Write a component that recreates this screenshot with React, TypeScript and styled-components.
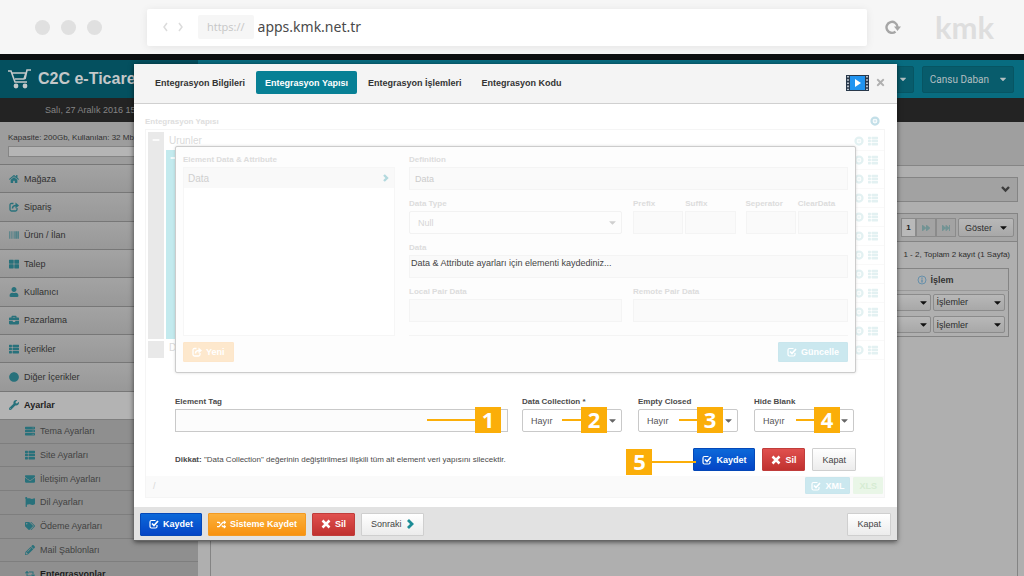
import React from 'react';
import styled, { createGlobalStyle, css } from 'styled-components';
import {
  FaHome, FaBarcode, FaThLarge, FaUser, FaBriefcase, FaThList, FaCircle, FaWrench, FaServer,
  FaEnvelope, FaFlag, FaTags, FaPencilAlt, FaRetweet, FaTimes, FaRandom,
  FaForward, FaFastForward, FaCaretDown, FaMinus,
} from 'react-icons/fa';

const Global = createGlobalStyle`
  * { box-sizing: border-box; }
  body { margin: 0; font-family: "Liberation Sans", Arial, sans-serif; font-size: 9px; color: #333; background: #b0b0b0; }
  button, input, select { font-family: inherit; margin: 0; }
`;

const Page = styled.div`
  position: relative;
  display: flex;
  flex-direction: column;
  height: 100vh;
  overflow: hidden;
`;

/* ---------- browser bar ---------- */
const BrowserBar = styled.header`
  display: flex;
  align-items: center;
  flex: none;
  height: 54px;
  padding: 0 32px 0 35px;
  background: #f6f6f6;
`;
const Lights = styled.div`
  display: flex;
  gap: 11px;
  width: 112px;
  span { width: 15px; height: 15px; border-radius: 50%; background: #e0e0e0; }
`;
const AddressBar = styled.div`
  display: flex;
  align-items: center;
  flex: 1;
  height: 37px;
  padding-left: 15px;
  background: #fff;
  border-radius: 2px;
  box-shadow: 0 1px 8px rgba(0, 0, 0, 0.08);
`;
const Arrows = styled.svg`
  width: 22px;
  height: 10px;
  margin-right: 14px;
`;
const Scheme = styled.span`
  padding: 0 9px;
  line-height: 24px;
  border-radius: 2px;
  background: #f6f6f6;
  color: #c6c6c6;
  font-family: "Open Sans", sans-serif;
  font-size: 11px;
`;
const Address = styled.input`
  flex: 1;
  min-width: 0;
  padding: 0 4px 2px;
  border: 0;
  outline: 0;
  background: none;
  color: #4a4a4a;
  && { font-family: "Noto Sans", sans-serif; }
  font-size: 14px;
`;
const Reload = styled.button`
  display: flex;
  width: 68px;
  padding: 0 0 0 18px;
  border: 0;
  background: none;
  color: #a6a6a6;
`;
const Brand = styled.span`
  width: 57px;
  color: #dedede;
  font: 700 31px/50px Lato, sans-serif;
`;

/* ---------- application behind the dialog ---------- */
const TopStrip = styled.div`
  flex: none;
  height: 6px;
  background: #0c0f11;
`;
const TopBar = styled.div`
  display: flex;
  align-items: center;
  justify-content: space-between;
  flex: none;
  height: 38px;
  padding: 0 10px 0 8px;
  background: linear-gradient(90deg, #04505f 198px, #086c80 198px);
`;
const AppTitle = styled.h1`
  display: flex;
  align-items: center;
  gap: 6px;
  margin: 0;
  color: #c4c8c9;
  font-size: 16px;
`;
const UserButtons = styled.div`
  display: flex;
  gap: 8px;
`;
const UserButton = styled.button`
  display: flex;
  align-items: center;
  justify-content: flex-end;
  gap: 9px;
  height: 27px;
  min-width: 60px;
  padding: 0 5px 0 7px;
  border: 1px solid #075563;
  border-radius: 2px;
  background: #085c6c;
  color: #b3bfc1;
  font-size: 10px;
  && { font-family: Roboto, sans-serif; }
`;
const DateBar = styled.div`
  flex: none;
  height: 24px;
  padding-left: 45px;
  background: #232323;
  color: #858585;
  font-size: 9px;
  line-height: 24px;
`;
const Columns = styled.div`
  display: flex;
  flex: 1;
  min-height: 0;
`;
const Sidebar = styled.aside`
  flex: none;
  width: 198px;
  background: #8f8f8f;
`;
const Capacity = styled.div`
  height: 42px;
  padding: 11px 8px 0;
  background: #9d9d9d;
  color: #303030;
  font-size: 8px;
  line-height: 9px;
`;
const Meter = styled.div`
  height: 11px;
  margin-top: 4px;
  border: 1px solid #858585;
  background: #b5b5b5;
`;
const Menu = styled.nav<{ $sub?: boolean }>`
  display: grid;
  grid-auto-rows: 1fr;
  height: ${p => (p.$sub ? 166 : 255)}px;
`;
const MenuLink = styled.a<{ $sub?: boolean; $active?: boolean }>`
  display: flex;
  align-items: center;
  gap: 5px;
  padding-left: ${p => (p.$sub ? 25 : 9)}px;
  border-top: 1px solid ${p => (p.$sub ? '#7e7e7e' : '#777')};
  background: ${p => (p.$active ? '#b3b3b3' : p.$sub ? '#8f8f8f' : 'linear-gradient(#a3a3a3, #989898)')};
  color: ${p => (p.$sub ? '#424242' : '#303030')};
  font-size: 9px;
  text-decoration: none;
  ${p => p.$active && css`font-weight: 700; color: #1c1c1c;`}
  svg { color: #28717b; width: 10px; height: 10px; }
`;
const SubLink = styled(MenuLink)<{ $bold?: boolean }>`
  font-weight: ${p => (p.$bold ? 700 : 400)};
  color: ${p => (p.$bold ? '#1c1c1c' : '#424242')};
`;
const Main = styled.main`
  display: flex;
  flex: 1;
  flex-direction: column;
  min-width: 0;
  background: #afafaf;
`;
const Crumbs = styled.div`
  flex: none;
  height: 44px;
  border-bottom: 1px solid #858585;
  background: #9f9f9f;
`;
const Content = styled.div`
  display: flex;
  flex: 1;
  flex-direction: column;
  min-height: 0;
  margin: 0 6px 0 12px;
  padding-top: 11px;
`;
const Filter = styled.div`
  display: flex;
  align-items: center;
  justify-content: flex-end;
  flex: none;
  height: 25px;
  margin-bottom: 11px;
  padding-right: 7px;
  border: 1px solid #848484;
  background: #a2a2a2;
  color: #3c3c3c;
`;
const ListPanel = styled.section`
  flex: 1;
  min-height: 0;
  border: 1px solid #848484;
  border-bottom: 0;
`;
const PageTools = styled.div`
  display: flex;
  justify-content: flex-end;
  height: 28px;
  padding: 4px 3px 0 0;
  border-bottom: 1px solid #848484;
  background: #a6a6a6;
`;
const PageButton = styled.button<{ $on?: boolean }>`
  width: ${p => (p.$on ? 15 : 20)}px;
  height: 19px;
  padding: 0;
  border: 1px solid #8b8b8b;
  background: ${p => (p.$on ? '#b9b9b9' : '#a3a3a3')};
  color: ${p => (p.$on ? '#222' : '#729394')};
  font-size: 8px;
  font-weight: 700;
  svg { vertical-align: middle; }
`;
const SmallMenu = styled.button<{ $wide?: boolean }>`
  display: flex;
  align-items: center;
  justify-content: space-between;
  width: ${p => (p.$wide ? 72 : 56)}px;
  height: ${p => (p.$wide ? 17 : 19)}px;
  margin-left: 2px;
  padding: 0 ${p => (p.$wide ? 1 : 4)}px 0 ${p => (p.$wide ? 3 : 6)}px;
  border: 1px solid #8b8b8b;
  border-radius: 2px;
  background: linear-gradient(#b8b8b8, #a8a8a8);
  color: #2c2c2c;
  font-size: 9px;
  svg { color: #111; font-size: 11px; }
`;
const Summary = styled.p`
  margin: 0;
  padding-right: 7px;
  color: #2d2d2d;
  font-size: 8px;
  line-height: 26px;
  text-align: right;
`;
const Table = styled.table`
  width: calc(100% - 8px);
  border: 1px solid #848484;
  border-collapse: collapse;
  th { height: 22px; padding: 0; text-align: left; font-size: 9px; border-bottom: 1px solid #999; }
  th:last-child, td:last-child { width: 78px; padding: 0; }
  td { height: 23px; padding: 0; }
  td:first-child button { margin-left: auto; }
  th:first-child { padding-right: 4px; text-align: right; color: #6790ab; }
  th svg { vertical-align: middle; }
`;

/* ---------- dialog ---------- */
const Dialog = styled.section`
  position: absolute;
  top: 64px;
  left: 134px;
  right: 127px;
  display: flex;
  flex-direction: column;
  background: #fff;
  border-bottom: 1px solid #666;
  box-shadow: 0 1px 5px rgba(0, 0, 0, 0.6);
`;
const DialogHeader = styled.div`
  display: flex;
  align-items: center;
  height: 40px;
  padding: 0 11px 2px 12px;
  border-bottom: 1px solid #d0d0d0;
  background: #f4f4f4;
`;
const Tab = styled.button<{ $on?: boolean }>`
  height: 23px;
  margin-right: 2px;
  padding: 0 9px;
  border: 0;
  border-radius: 2px;
  background: ${p => (p.$on ? '#078095' : 'none')};
  color: ${p => (p.$on ? '#fff' : '#333')};
  font-size: 9px;
  font-weight: 700;
`;
const HeaderEnd = styled.div`
  display: flex;
  align-items: center;
  gap: 6px;
  margin-left: auto;
`;
const CloseButton = styled.button`
  display: flex;
  padding: 0;
  border: 0;
  background: none;
  color: #b0b0b0;
  font-size: 11px;
`;
const DialogBody = styled.div`
  position: relative;
  padding: 9px 12px 9px 11px;
`;
const TreeHeading = styled.div`
  display: flex;
  align-items: center;
  justify-content: space-between;
  height: 16px;
  padding-right: 5px;
  color: #dedede;
  font-size: 8px;
  font-weight: 700;
  svg { color: #c3dfe8; }
`;
const TreeBox = styled.div`
  display: flex;
  flex-direction: column;
  height: 369px;
  border: 1px solid #f5f5f5;
`;
const TreeArea = styled.div`
  display: flex;
  flex: 1;
  padding-top: 2px;
`;
const Rail = styled.div`
  display: flex;
  flex-direction: column;
  gap: 2px;
  width: 16px;
  margin: 0 2px;
`;
const NestedRail = styled(Rail)`
  margin: 0;
`;
const RailBlock = styled.div<{ $h: number; $teal?: boolean }>`
  height: ${p => p.$h}px;
  padding-top: 4px;
  background: ${p => (p.$teal ? '#c3eaee' : '#e9e9e9')};
  color: #fff;
  font-size: 8px;
  line-height: 8px;
  text-align: center;
`;
const Branch = styled.div`
  flex: 1;
`;
const BranchName = styled.div`
  height: 18px;
  padding-left: 3px;
  color: #dadada;
  font-size: 10px;
  line-height: 17px;
`;
const TreeRows = styled.div`
  width: 32px;
  div {
    display: flex;
    align-items: center;
    gap: 4px;
    height: 19px;
    padding-left: 2px;
    border-bottom: 1px solid #f9f9f9;
    color: #e3f1f2;
    font-size: 10px;
  }
`;
const TreeFoot = styled.div`
  display: flex;
  gap: 3px;
  height: 21px;
  padding: 1px 1px 0 7px;
  background: #fafafa;
  color: #d8d8d8;
  line-height: 18px;
  span { flex: 1; }
`;

const Popup = styled.div`
  position: absolute;
  top: 42px;
  left: 41px;
  right: 41px;
`;
const Panel = styled.div`
  display: flex;
  flex-direction: column;
  height: 227px;
  padding: 8px 7px;
  border: 1px solid #ccc;
  border-radius: 2px;
  background: #fdfdfd;
  box-shadow: 0 0 3px rgba(0, 0, 0, 0.15);
  color: #d6d6d6;
`;
const PanelColumns = styled.div`
  display: grid;
  grid-template-columns: 212px 1fr;
  gap: 14px;
  height: 180px;
`;
const Label = styled.label<{ $faint?: boolean }>`
  display: block;
  height: 12px;
  color: ${p => (p.$faint ? '#dcdcdc' : '#4b4b4b')};
  font-size: 8px;
  font-weight: 700;
  line-height: 9px;
  white-space: nowrap;
`;
const DataList = styled.div`
  display: flex;
  flex-direction: column;
  height: 169px;
  border: 1px solid #f6f6f6;
  background: #fff;
`;
const DataRow = styled.div`
  display: flex;
  align-items: center;
  justify-content: space-between;
  height: 20px;
  padding: 0 4px;
  background: #f9f9f9;
  color: #cfcfcf;
  font-size: 10px;
  svg { color: #b3d9de; }
`;
const Fields = styled.div`
  display: grid;
  grid-template-columns: 213px 1fr;
  grid-auto-rows: 35px;
  align-content: start;
  gap: 9px 11px;
  border-bottom: 1px solid #f4f4f4;
`;
const Cell = styled.div<{ $all?: boolean }>`
  position: relative;
  grid-column: ${p => (p.$all ? '1 / -1' : 'auto')};
  min-width: 0;
`;
const Quad = styled.div`
  display: grid;
  grid-template-columns: 1fr 1fr 6px 1fr 1fr;
  gap: 2px;
  ${Cell}:nth-child(3) { grid-column: 4; }
`;
const TextInput = styled.input<{ $faint?: boolean; $note?: boolean }>`
  display: block;
  width: 100%;
  height: 23px;
  padding: 0 ${p => (p.$note ? 1 : 5)}px ${p => (p.$note ? 7 : 0)}px;
  border: 1px solid ${p => (p.$faint ? '#f4f4f4' : '#c9c9c9')};
  outline: 0;
  background: ${p => (p.$faint ? '#fafafa' : '#fcfcfc')};
  color: ${p => (p.$note ? '#444' : '#cbcbcb')};
  font-size: 9px;
`;
const SelectInput = styled.select<{ $faint?: boolean }>`
  display: block;
  width: 100%;
  height: 23px;
  padding: 0 8px;
  appearance: none;
  border: 1px solid ${p => (p.$faint ? '#f2f2f2' : '#c9c9c9')};
  border-radius: 2px;
  outline: 0;
  background: ${p => (p.$faint ? '#fdfdfd' : '#fff')};
  color: ${p => (p.$faint ? '#d6d6d6' : '#555')};
  font-size: 9px;
`;
const Caret = styled(FaCaretDown)<{ $faint?: boolean }>`
  position: absolute;
  right: 4px;
  bottom: 6px;
  color: ${p => (p.$faint ? '#cfcfcf' : '#666')};
  font-size: 11px;
  pointer-events: none;
`;
const PanelButtons = styled.div`
  display: flex;
  justify-content: space-between;
  padding-top: 7px;
`;

type Tone = 'blue' | 'orange' | 'red' | 'plain' | 'paleOrange' | 'paleTeal' | 'paleGreen';
const tones: Record<Tone, { bg: string; fg: string; line: string }> = {
  blue: { bg: 'linear-gradient(#0c69d9, #0444c6)', fg: '#fff', line: '#0548b8' },
  orange: { bg: 'linear-gradient(#fbb03c, #f8920f)', fg: '#fff', line: '#f39a22' },
  red: { bg: 'linear-gradient(#e0504e, #c0312f)', fg: '#fff', line: '#c03d3b' },
  plain: { bg: 'linear-gradient(#fff, #ececec)', fg: '#444', line: '#cfcfcf' },
  paleOrange: { bg: '#fde8cd', fg: '#fff', line: '#fde6ca' },
  paleTeal: { bg: '#cbe8ef', fg: '#fff', line: '#c9e6ed' },
  paleGreen: { bg: '#e9f6e7', fg: '#d6ecd3', line: '#e9f6e7' },
};
const Button = styled.button<{ $tone: Tone; $size?: 'small' | 'mid' }>`
  display: flex;
  align-items: center;
  gap: 4px;
  height: ${p => (p.$size === 'small' ? 17 : p.$size === 'mid' ? 20 : 23)}px;
  padding: 0 ${p => (p.$size === 'small' ? 5 : p.$tone === 'plain' ? 9 : 8)}px;
  border: 1px solid ${p => tones[p.$tone].line};
  border-radius: 1px;
  background: ${p => tones[p.$tone].bg};
  color: ${p => tones[p.$tone].fg};
  font-size: 9px;
  font-weight: ${p => (p.$tone === 'plain' ? 400 : 700)};
  white-space: nowrap;
`;
const TagForm = styled.form`
  display: grid;
  grid-template-columns: 1fr 100px 100px 100px;
  gap: 16px;
  padding: 24px 2px 0 0;
  ${Cell}:first-child { margin-right: -2px; }
`;
const Step = styled.span<{ $right: number; $line: number }>`
  position: absolute;
  right: ${p => p.$right}px;
  bottom: -1px;
  width: 26px;
  height: 26px;
  background: #fbae09;
  color: #fff;
  font: 700 22px/25px "Open Sans", sans-serif;
  text-align: center;
  &::before {
    content: '';
    position: absolute;
    top: 12px;
    right: 26px;
    width: ${p => p.$line}px;
    height: 2px;
    background: #fbae09;
  }
`;
const StepFive = styled(Step)`
  position: relative;
  right: auto;
  bottom: auto;
  align-self: flex-end;
  margin: 0 34px -4px 0;
  &::before { right: auto; left: 26px; }
`;
const ActionRow = styled.div`
  display: flex;
  align-items: center;
  gap: 7px;
  padding-top: 16px;
`;
const Warning = styled.p`
  flex: 1;
  margin: 0;
  color: #4a4a4a;
  font-size: 8px;
  white-space: nowrap;
`;
const DialogFooter = styled.div`
  display: flex;
  align-items: center;
  gap: 6px;
  height: 33px;
  padding: 1px 6px 0;
  background: #e2e2e2;
  button:last-child { margin-left: auto; }
`;

const CheckIcon = () => (
  <svg width="10" height="10" viewBox="0 0 20 20" fill="none" stroke="currentColor" aria-hidden="true">
    <path d="M13 3H5Q2 3 2 6v9q0 3 3 3h8q3 0 3-3v-3" strokeWidth="2.4" />
    <path d="M6 9l4 4 8-9" strokeWidth="3.4" />
  </svg>
);
const CrossIcon = () => (
  <svg width="10" height="10" viewBox="0 0 20 20" fill="none" stroke="currentColor" strokeWidth="5" aria-hidden="true">
    <path d="M3 3l14 14M17 3L3 17" />
  </svg>
);
const ShareIcon = () => (
  <svg width="10" height="10" viewBox="0 0 20 20" fill="none" stroke="currentColor" aria-hidden="true">
    <path d="M9 3H5Q2 3 2 6v9q0 3 3 3h8q3 0 3-3v-3" strokeWidth="2.6" />
    <path d="M7 13q0-6 7-6" strokeWidth="3" />
    <path d="M13 1l7 6-7 6z" fill="currentColor" stroke="none" />
  </svg>
);
const NextIcon = () => (
  <svg width="8" height="10" viewBox="0 0 8 10" fill="none" stroke="#1c8c96" strokeWidth="2.8" aria-hidden="true">
    <path d="M2 1l4 4-4 4" />
  </svg>
);
const RowArrow = () => (
  <svg width="7" height="8" viewBox="0 0 7 8" fill="none" stroke="currentColor" strokeWidth="2.4" aria-hidden="true">
    <path d="M1 1l3 3-3 3" />
  </svg>
);
const DownIcon = () => (
  <svg width="9" height="7" viewBox="0 0 9 7" fill="none" stroke="currentColor" strokeWidth="2.4" aria-hidden="true">
    <path d="M1 1l3.500 3.500L8 1" />
  </svg>
);
const ReloadIcon = () => (
  <svg width="16" height="16" viewBox="0 0 16 16" fill="none" stroke="currentColor" strokeWidth="2.4" aria-hidden="true">
    <path d="M10.500 12.600A5.500 5.500 0 1 1 12.500 8" />
    <path d="M9 7.500h7L12.500 12z" fill="currentColor" stroke="none" />
  </svg>
);
const PlusCircle = () => (
  <svg width="10" height="10" viewBox="0 0 20 20" fill="none" stroke="currentColor" aria-hidden="true">
    <circle cx="10" cy="10" r="7" strokeWidth="4.500" />
    <path d="M10 7v6M7 10h6" strokeWidth="1.500" />
  </svg>
);
const InfoIcon = () => (
  <svg width="10" height="10" viewBox="0 0 20 20" fill="none" stroke="currentColor" strokeWidth="2" aria-hidden="true">
    <circle cx="10" cy="10" r="8" />
    <path d="M10 5v2.500M10 9v6" strokeWidth="3" />
  </svg>
);
const CartIcon = () => (
  <svg width="24" height="20" viewBox="0 0 24 20" fill="none" stroke="#c4c8c9" strokeWidth="1.600" aria-hidden="true">
    <path d="M0 2h3l4 11h12M4 4h14l-2 6H7M17 10l2-9h4" />
    <circle cx="8" cy="17" r="1.600" fill="#c4c8c9" />
    <circle cx="17" cy="17" r="1.600" fill="#c4c8c9" />
  </svg>
);
const FilmIcon = () => (
  <svg width="23" height="16" viewBox="0 0 23 16" aria-hidden="true">
    <rect width="23" height="16" fill="#28384a" />
    <rect x="4" y="1" width="15" height="14" fill="#2094f0" />
    <path d="M2 1v14M21 1v14" stroke="#dfe7ee" strokeWidth="1.600" strokeDasharray="1.6 1.6" />
    <path d="M9 4l6 4-6 4z" fill="#fff" />
  </svg>
);

const menu: [React.ReactNode, string][] = [
  [<FaHome />, 'Mağaza'], [<ShareIcon />, 'Sipariş'], [<FaBarcode />, 'Ürün / İlan'],
  [<FaThLarge />, 'Talep'], [<FaUser />, 'Kullanıcı'], [<FaBriefcase />, 'Pazarlama'],
  [<FaThList />, 'İçerikler'], [<FaCircle />, 'Diğer İçerikler'], [<FaWrench />, 'Ayarlar'],
];
const subMenu: [React.ReactNode, string][] = [
  [<FaServer />, 'Tema Ayarları'], [<FaThList />, 'Site Ayarları'], [<FaEnvelope />, 'İletişim Ayarları'],
  [<FaFlag />, 'Dil Ayarları'], [<FaTags />, 'Ödeme Ayarları'], [<FaPencilAlt />, 'Mail Şablonları'],
  [<FaRetweet />, 'Entegrasyonlar'],
];
const choices = [
  { id: 'collection', label: 'Data Collection *', step: 2, right: 15, line: 19 },
  { id: 'empty', label: 'Empty Closed', step: 3, right: 15, line: 18 },
  { id: 'blank', label: 'Hide Blank', step: 4, right: 14, line: 18 },
];

export default function App() {
  return (
    <Page>
      <Global />
      <BrowserBar>
        <Lights><span /><span /><span /></Lights>
        <AddressBar>
          <Arrows viewBox="0 0 22 10" fill="none" stroke="#dcdcdc" strokeWidth="1.500" aria-hidden="true">
            <path d="M5 1L2 5l3 4M17 1l3 4-3 4" />
          </Arrows>
          <Scheme>https://</Scheme>
          <Address aria-label="Adres" defaultValue="apps.kmk.net.tr" />
        </AddressBar>
        <Reload aria-label="Yenile"><ReloadIcon /></Reload>
        <Brand>kmk</Brand>
      </BrowserBar>

      <TopStrip />
      <TopBar>
        <AppTitle><CartIcon />C2C e-Ticaret</AppTitle>
        <UserButtons>
          <UserButton aria-label="Menü"><FaCaretDown /></UserButton>
          <UserButton>Cansu Daban<FaCaretDown /></UserButton>
        </UserButtons>
      </TopBar>
      <DateBar>Salı, 27 Aralık 2016 15:00</DateBar>
      <Columns>
        <Sidebar>
          <Capacity>Kapasite: 200Gb, Kullanılan: 32 Mb<Meter /></Capacity>
          <Menu>
            {menu.map(([icon, name]) => (
              <MenuLink key={name} href="#" $active={name === 'Ayarlar'}>{icon}{name}</MenuLink>
            ))}
          </Menu>
          <Menu $sub>
            {subMenu.map(([icon, name]) => (
              <SubLink key={name} href="#" $sub $bold={name === 'Entegrasyonlar'}>{icon}{name}</SubLink>
            ))}
          </Menu>
        </Sidebar>
        <Main>
          <Crumbs />
          <Content>
            <Filter><DownIcon /></Filter>
            <ListPanel>
              <PageTools>
                <PageButton $on>1</PageButton>
                <PageButton aria-label="Sonraki sayfa"><FaForward /></PageButton>
                <PageButton aria-label="Son sayfa"><FaFastForward /></PageButton>
                <SmallMenu>Göster<FaCaretDown /></SmallMenu>
              </PageTools>
              <Summary>1 - 2, Toplam 2 kayıt (1 Sayfa)</Summary>
              <Table>
                <thead><tr><th><InfoIcon /></th><th>İşlem</th></tr></thead>
                <tbody>
                  {[1, 2].map(n => (
                    <tr key={n}>
                      <td><SmallMenu $wide aria-label="Seçenekler"><span /><FaCaretDown /></SmallMenu></td>
                      <td><SmallMenu $wide>İşlemler<FaCaretDown /></SmallMenu></td>
                    </tr>
                  ))}
                </tbody>
              </Table>
            </ListPanel>
          </Content>
        </Main>
      </Columns>

      <Dialog role="dialog" aria-label="Entegrasyon Yapısı">
        <DialogHeader>
          <Tab>Entegrasyon Bilgileri</Tab>
          <Tab $on>Entegrasyon Yapısı</Tab>
          <Tab>Entegrasyon İşlemleri</Tab>
          <Tab>Entegrasyon Kodu</Tab>
          <HeaderEnd>
            <FilmIcon />
            <CloseButton aria-label="Kapat"><FaTimes /></CloseButton>
          </HeaderEnd>
        </DialogHeader>
        <DialogBody>
          <TreeHeading>Entegrasyon Yapısı<PlusCircle /></TreeHeading>
          <TreeBox>
            <TreeArea>
              <Rail>
                <RailBlock $h={207}><FaMinus /></RailBlock>
                <RailBlock $h={17} />
              </Rail>
              <Branch>
                <BranchName>Urunler</BranchName>
                <NestedRail><RailBlock $h={189} $teal><FaMinus /></RailBlock></NestedRail>
                <BranchName>D</BranchName>
              </Branch>
              <TreeRows>
                {Array.from({ length: 12 }, (_, i) => <div key={i}><PlusCircle /><FaThList /></div>)}
              </TreeRows>
            </TreeArea>
            <TreeFoot>
              <span>/</span>
              <Button $tone="paleTeal" $size="small"><CheckIcon />XML</Button>
              <Button $tone="paleGreen" $size="small">XLS</Button>
            </TreeFoot>
          </TreeBox>

          <Popup>
            <Panel>
              <PanelColumns>
                <div>
                  <Label as="div" $faint>Element Data &amp; Attribute</Label>
                  <DataList><DataRow>Data<RowArrow /></DataRow></DataList>
                </div>
                <Fields>
                  <Cell $all>
                    <Label $faint htmlFor="definition">Definition</Label>
                    <TextInput $faint id="definition" defaultValue="Data" />
                  </Cell>
                  <Cell>
                    <Label $faint htmlFor="type">Data Type</Label>
                    <SelectInput $faint id="type"><option>Null</option></SelectInput>
                    <Caret $faint />
                  </Cell>
                  <Quad>
                    {['Prefix', 'Suffix', 'Seperator', 'ClearData'].map(name => (
                      <Cell key={name}>
                        <Label $faint htmlFor={name}>{name}</Label>
                        <TextInput $faint id={name} />
                      </Cell>
                    ))}
                  </Quad>
                  <Cell $all>
                    <Label $faint htmlFor="data">Data</Label>
                    <TextInput $faint $note id="data" readOnly value="Data & Attribute ayarları için elementi kaydediniz..." />
                  </Cell>
                  <Cell>
                    <Label $faint htmlFor="local">Local Pair Data</Label>
                    <TextInput $faint id="local" />
                  </Cell>
                  <Cell>
                    <Label $faint htmlFor="remote">Remote Pair Data</Label>
                    <TextInput $faint id="remote" />
                  </Cell>
                </Fields>
              </PanelColumns>
              <PanelButtons>
                <Button $tone="paleOrange" $size="mid"><ShareIcon />Yeni</Button>
                <Button $tone="paleTeal" $size="mid"><CheckIcon />Güncelle</Button>
              </PanelButtons>
            </Panel>
            <TagForm>
              <Cell>
                <Label htmlFor="tag">Element Tag</Label>
                <TextInput id="tag" />
                <Step $right={7} $line={48}>1</Step>
              </Cell>
              {choices.map(c => (
                <Cell key={c.id}>
                  <Label htmlFor={c.id}>{c.label}</Label>
                  <SelectInput id={c.id}><option>Hayır</option></SelectInput>
                  <Caret />
                  <Step $right={c.right} $line={c.line}>{c.step}</Step>
                </Cell>
              ))}
            </TagForm>
            <ActionRow>
              <Warning><b>Dikkat:</b> "Data Collection" değerinin değiştirilmesi ilişkili tüm alt element veri yapısını silecektir.</Warning>
              <StepFive $right={0} $line={44}>5</StepFive>
              <Button $tone="blue"><CheckIcon />Kaydet</Button>
              <Button $tone="red"><CrossIcon />Sil</Button>
              <Button $tone="plain">Kapat</Button>
            </ActionRow>
          </Popup>
        </DialogBody>
        <DialogFooter>
          <Button $tone="blue"><CheckIcon />Kaydet</Button>
          <Button $tone="orange"><FaRandom />Sisteme Kaydet</Button>
          <Button $tone="red"><CrossIcon />Sil</Button>
          <Button $tone="plain">Sonraki<NextIcon /></Button>
          <Button $tone="plain">Kapat</Button>
        </DialogFooter>
      </Dialog>
    </Page>
  );
}
